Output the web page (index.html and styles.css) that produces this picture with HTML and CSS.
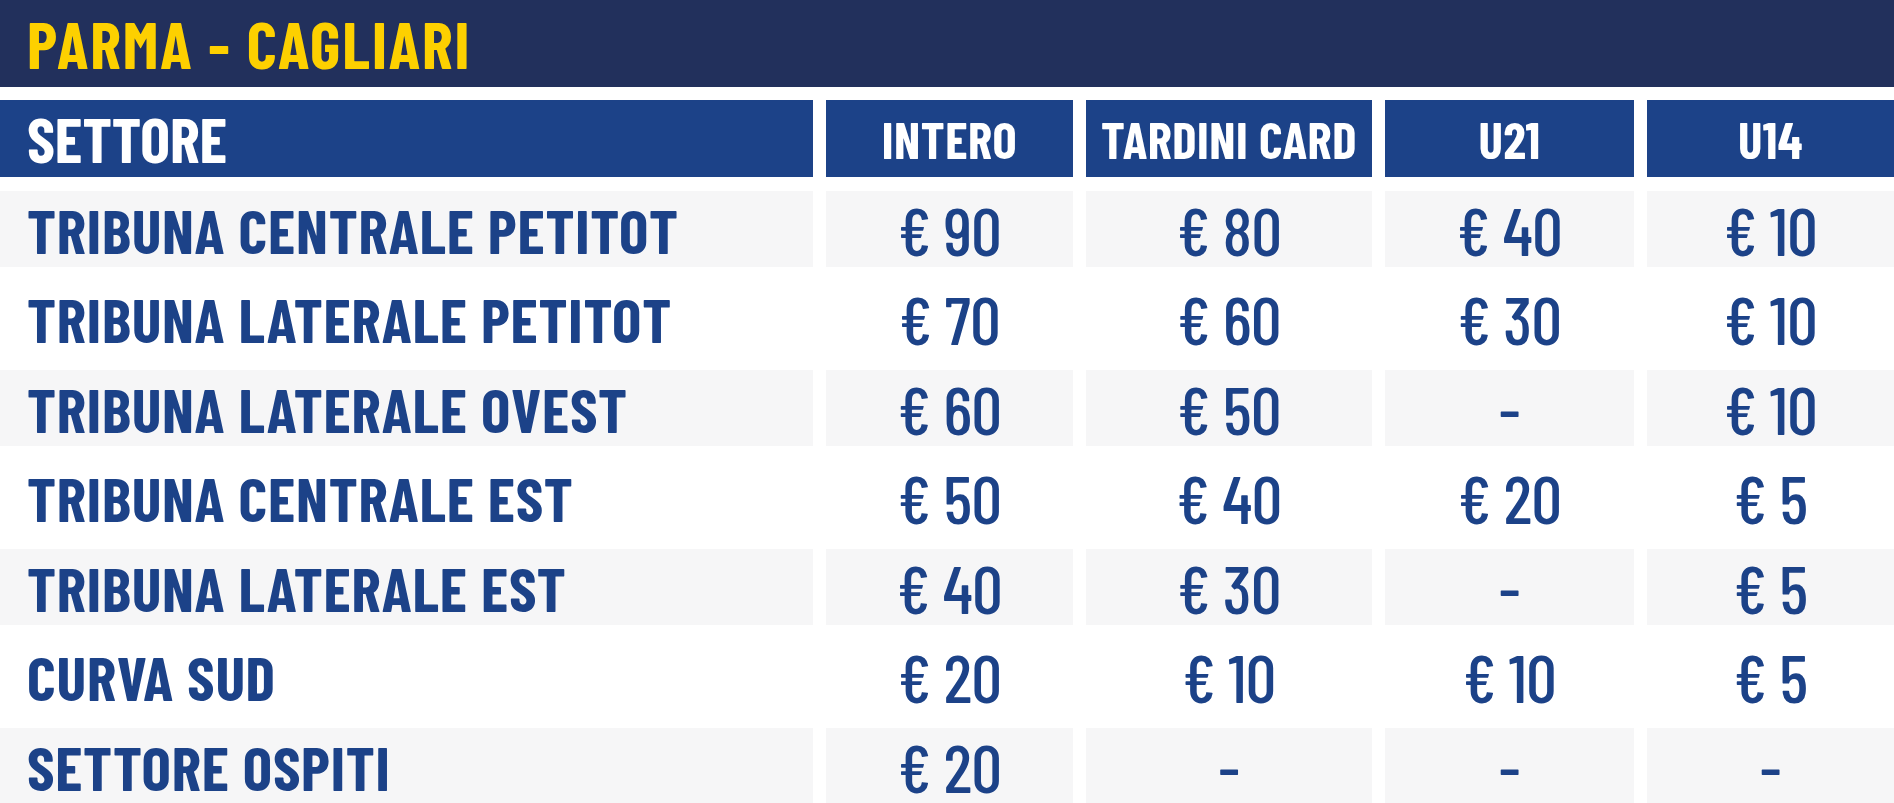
FILE: index.html
```
<!DOCTYPE html>
<html lang="it">
<head>
<meta charset="utf-8">
<title>Parma - Cagliari</title>
<link rel="stylesheet" href="styles.css">
</head>
<body>
<div class="page">
  <header class="title-bar"><h1 class="title">PARMA - CAGLIARI</h1></header>
  <div class="prices">
    <div class="row head">
      <div class="cell sector">SETTORE</div>
      <div class="cell label">INTERO</div>
      <div class="cell label">TARDINI CARD</div>
      <div class="cell label">U21</div>
      <div class="cell label">U14</div>
    </div>
    <div class="row alt">
      <div class="cell sector">TRIBUNA CENTRALE PETITOT</div>
      <div class="cell price">€ 90</div>
      <div class="cell price">€ 80</div>
      <div class="cell price">€ 40</div>
      <div class="cell price">€ 10</div>
    </div>
    <div class="row">
      <div class="cell sector">TRIBUNA LATERALE PETITOT</div>
      <div class="cell price">€ 70</div>
      <div class="cell price">€ 60</div>
      <div class="cell price">€ 30</div>
      <div class="cell price">€ 10</div>
    </div>
    <div class="row alt">
      <div class="cell sector">TRIBUNA LATERALE OVEST</div>
      <div class="cell price">€ 60</div>
      <div class="cell price">€ 50</div>
      <div class="cell price">-</div>
      <div class="cell price">€ 10</div>
    </div>
    <div class="row">
      <div class="cell sector">TRIBUNA CENTRALE EST</div>
      <div class="cell price">€ 50</div>
      <div class="cell price">€ 40</div>
      <div class="cell price">€ 20</div>
      <div class="cell price">€ 5</div>
    </div>
    <div class="row alt">
      <div class="cell sector">TRIBUNA LATERALE EST</div>
      <div class="cell price">€ 40</div>
      <div class="cell price">€ 30</div>
      <div class="cell price">-</div>
      <div class="cell price">€ 5</div>
    </div>
    <div class="row">
      <div class="cell sector">CURVA SUD</div>
      <div class="cell price">€ 20</div>
      <div class="cell price">€ 10</div>
      <div class="cell price">€ 10</div>
      <div class="cell price">€ 5</div>
    </div>
    <div class="row alt">
      <div class="cell sector">SETTORE OSPITI</div>
      <div class="cell price">€ 20</div>
      <div class="cell price">-</div>
      <div class="cell price">-</div>
      <div class="cell price">-</div>
    </div>
  </div>
</div>
</body>
</html>
```
FILE: styles.css
```
html, body {
  margin: 0;
  padding: 0;
  background: #ffffff;
}
.page {
  width: 1894px;
  font-family: "Barlow Condensed", "Roboto Condensed", "Liberation Sans", sans-serif;
  color: #1c4288;
}
.title-bar {
  height: 87px;
  background: #22305c;
  display: flex;
  align-items: center;
  padding-left: 27px;
  box-sizing: border-box;
}
.title {
  margin: 0;
  color: #fdd000;
  font-size: 65px;
  font-weight: 700;
  letter-spacing: 1.9px;
  line-height: 1;
}
.prices {
  display: flex;
  flex-direction: column;
  gap: 13.5px;
  margin-top: 13px;
}
.row {
  display: grid;
  grid-template-columns: 813px 247px 286px 249px 1fr;
  column-gap: 13px;
  height: 76px;
}
.row.head {
  height: 77px;
}
.cell {
  display: flex;
  align-items: center;
  justify-content: center;
  white-space: nowrap;
  line-height: 1;
}
.row.alt .cell {
  background: #f6f6f7;
}
.sector {
  justify-content: flex-start;
  padding-left: 27px;
  font-size: 62px;
  font-weight: 700;
  letter-spacing: 0.8px;
}
.price {
  font-size: 68px;
  font-weight: 500;
  letter-spacing: -0.5px;
}
.head .cell {
  background: #1c4288;
  color: #ffffff;
}
.head .sector {
  font-size: 63px;
  letter-spacing: 0;
}
.head .label {
  font-size: 51px;
  font-weight: 700;
  letter-spacing: 0.5px;
}
```
